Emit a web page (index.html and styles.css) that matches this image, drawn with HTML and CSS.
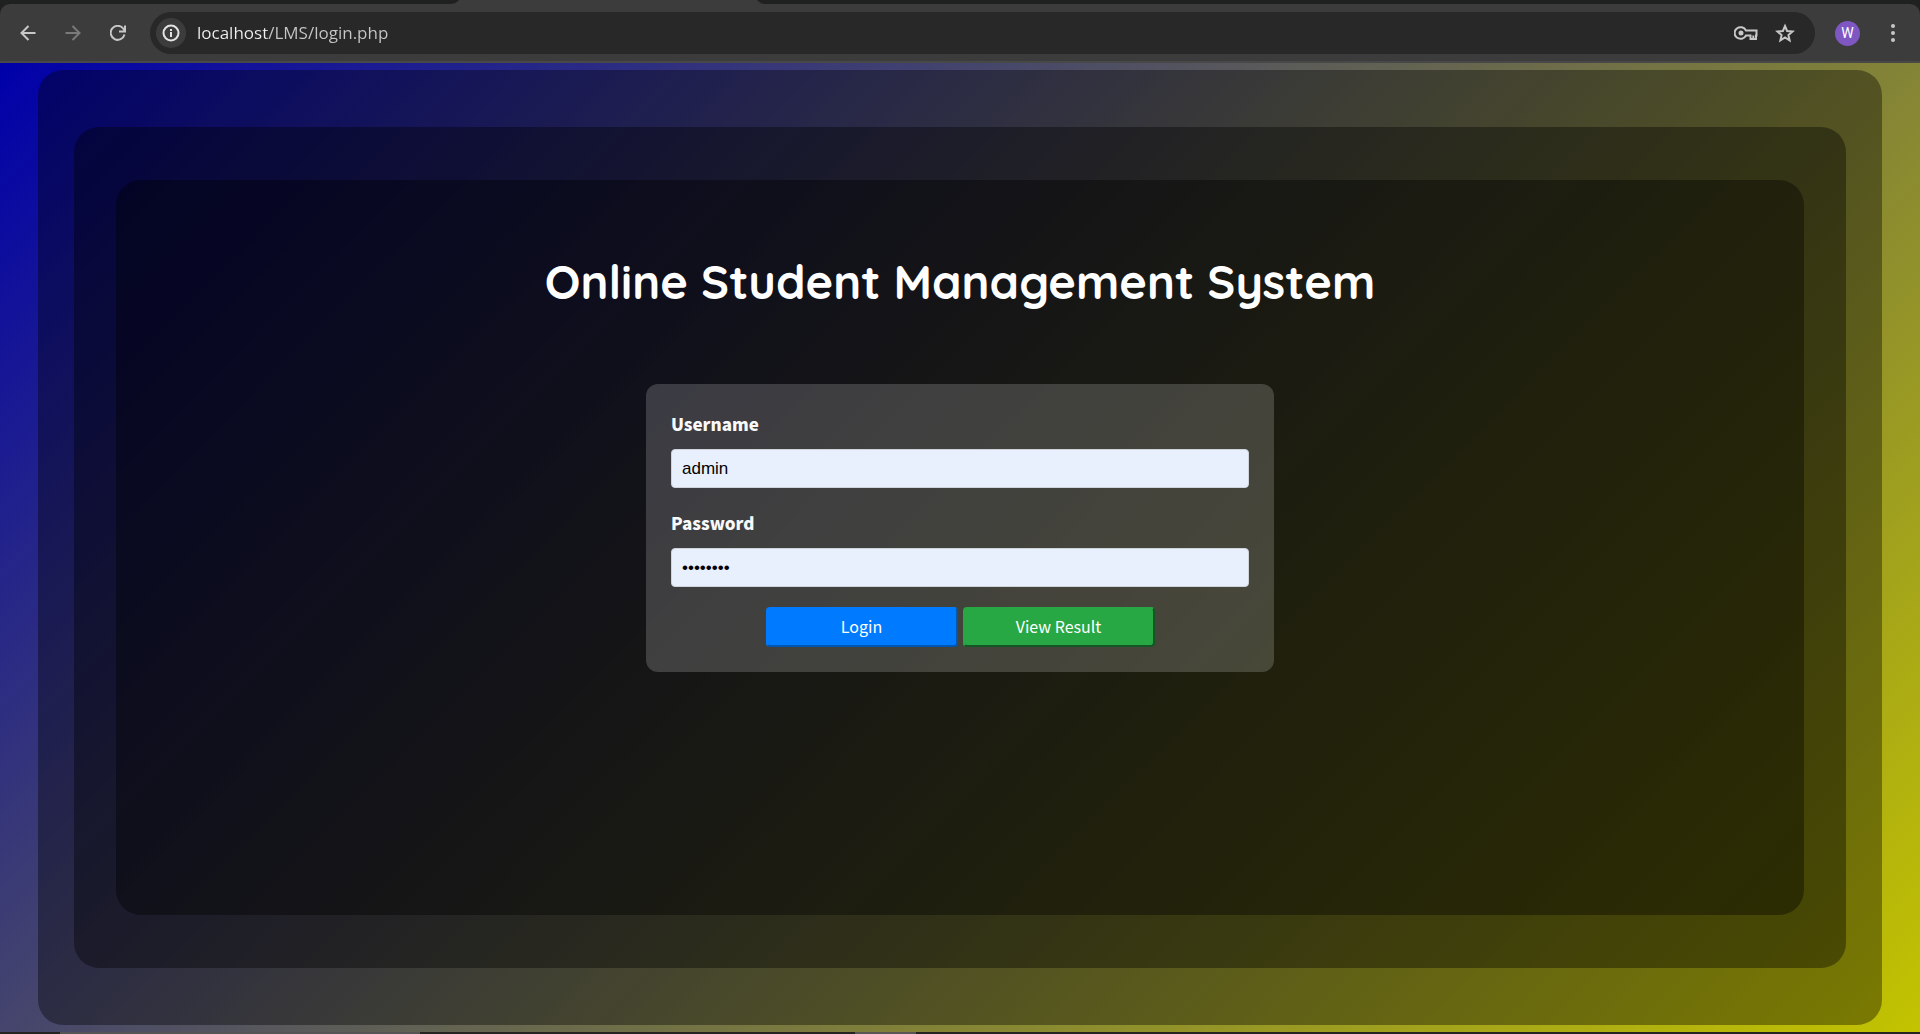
FILE: index.html
```
<!DOCTYPE html>
<html lang="en">
<head>
<meta charset="utf-8">
<meta name="viewport" content="width=device-width, initial-scale=1">
<title>Online Student Management System</title>
<link rel="stylesheet" href="styles.css">
</head>
<body>
<div class="window">
  <div class="tabs"><div class="tab-active"></div></div>
  <header class="toolbar">
    <nav class="nav">
      <button class="icon-btn" type="button" aria-label="Back">
        <svg width="16" height="16" viewBox="0 0 16 16" fill="none" stroke="#c7c7c7" stroke-width="2"><path d="M15.500 8H2M8.500 1L1.500 8l7 7"/></svg>
      </button>
      <button class="icon-btn" type="button" aria-label="Forward" disabled>
        <svg width="16" height="16" viewBox="0 0 16 16" fill="none" stroke="#7a7a7a" stroke-width="2"><path d="M.5 8H14M7.500 1l7 7-7 7"/></svg>
      </button>
      <button class="icon-btn" type="button" aria-label="Reload">
        <svg width="16" height="16" viewBox="0 0 16 16" fill="none" stroke="#c7c7c7" stroke-width="2"><path d="M14.500 9.500A7 7 0 1 1 13.200 3.500L14.500 5.500M15 .5v6H9"/></svg>
      </button>
    </nav>
    <div class="omnibox">
      <button class="site-info" type="button" aria-label="Site information">
        <svg width="18" height="18" viewBox="0 0 18 18" fill="none" stroke="#e3e3e3" stroke-width="2"><circle cx="9" cy="9" r="7.500"/><path d="M9 8v5M9 5v2"/></svg>
      </button>
      <input class="url" type="text" aria-label="Address" value="localhost/LMS/login.php">
      <button class="icon-btn" type="button" aria-label="Passwords">
        <svg width="24" height="14" viewBox="0 0 24 14" fill="none" stroke="#c7c7c7" stroke-width="2"><path d="M12 4.500A6 5.800 0 1 0 12 9.500H16.500V13H22V9.500H22.500V4.500zM19.300 9.500V12"/><circle cx="7" cy="7" r="2.500" fill="#c7c7c7" stroke="none"/></svg>
      </button>
      <button class="icon-btn" type="button" aria-label="Bookmark">
        <svg width="20" height="20" viewBox="0 0 20 20" fill="none" stroke="#c7c7c7" stroke-width="2"><path d="M10 3l2.100 5 5.400.5-4.100 3.500 1.200 5.300L10 14.500l-4.600 2.800L6.600 12 2.500 8.500 7.900 8z"/></svg>
      </button>
    </div>
    <button class="avatar" type="button">W</button>
    <button class="icon-btn" type="button" aria-label="Menu">
      <svg width="6" height="18" viewBox="0 0 6 18" fill="#c7c7c7"><circle cx="3" cy="2" r="2"/><circle cx="3" cy="9" r="2"/><circle cx="3" cy="16" r="2"/></svg>
    </button>
  </header>

  <div class="page">
    <div class="layer layer-outer">
      <div class="layer layer-middle">
        <main class="layer layer-inner">
          <h1 class="title">Online Student Management System</h1>
          <form class="card">
            <div class="field">
              <label class="label" for="username">Username</label>
              <input class="control" id="username" type="text" value="admin">
            </div>
            <div class="field">
              <label class="label" for="password">Password</label>
              <input class="control" id="password" type="password" value="admin123">
            </div>
            <div class="actions">
              <button class="btn btn-primary" type="button">Login</button>
              <button class="btn btn-success" type="button">View Result</button>
            </div>
          </form>
        </main>
      </div>
    </div>
  </div>

  <div class="taskbar"><div class="task-search"></div><div class="task-app"></div></div>
</div>
</body>
</html>
```

FILE: styles.css
```
* { box-sizing: border-box; }

body { margin: 0; }

button, input { font: inherit; }

.window {
  min-height: 100vh;
  display: flex;
  flex-direction: column;
  background: #1f2120;
}

/* Browser toolbar */
.tabs { height: 4px; padding-left: 450px; }
.tab-active { width: 316px; height: 4px; background: #3c3c3c; clip-path: path("M0 4Q6 4 9 0H307Q310 4 316 4Z"); }

.toolbar {
  height: 59px;
  display: flex;
  align-items: center;
  padding: 1px 24px 0 18px;
  border-bottom: 2px solid #484848;
  border-radius: 10px 10px 0 0;
  background: #3c3c3c;
}

.icon-btn {
  display: grid;
  place-items: center;
  padding: 0;
  border: 0;
  background: none;
}

.nav { display: flex; gap: 25px; margin-right: 22px; }
.nav .icon-btn { width: 20px; height: 20px; }

.omnibox {
  flex: 1;
  height: 42px;
  display: flex;
  align-items: center;
  gap: 17px;
  padding: 0 20px 0 6px;
  border-radius: 21px;
  background: #282828;
}

.site-info {
  width: 30px;
  height: 30px;
  display: grid;
  place-items: center;
  padding: 0;
  border: 0;
  border-radius: 50%;
  background: #3c3c3c;
}

.url {
  flex: 1;
  margin-left: -6px;
  padding: 0;
  border: 0;
  color: transparent;
  background: linear-gradient(90deg, #f0f0f0 69px, #c7c7c7 69px);
  background-clip: text;
  font: 17px/26px "Segoe UI", "Open Sans", sans-serif;
}

.avatar {
  width: 25px;
  height: 25px;
  margin: 0 30px 0 20px;
  padding: 0;
  border: 0;
  border-radius: 50%;
  background: #7e57c2;
  color: #fff;
  font: 400 14px/25px Roboto, sans-serif;
}

/* Login page */
.page {
  flex: 1;
  display: flex;
  padding: 7px 2%;
  background: linear-gradient(135deg, #0000aa, #5a5a5a 44%, #c3c300);
}

.layer {
  flex: 1;
  display: flex;
  border-radius: 25px;
  background: rgba(0, 0, 0, 0.37);
}
.layer-outer { padding: 57px 36px; }
.layer-middle { padding: 53px 42px; }
.layer-inner {
  flex-direction: column;
  align-items: center;
  padding: 72px 24px;
}

.title {
  margin: 0 0 72px;
  color: #fff;
  font: 700 47px/60px Quicksand, Lato, sans-serif;
  text-align: center;
}

.card {
  width: 100%;
  max-width: 628px;
  display: flex;
  flex-direction: column;
  gap: 20px;
  padding: 25px;
  border-radius: 12px;
  background: rgba(255, 255, 255, 0.18);
  font-family: "Source Sans Pro", "Noto Sans CJK JP", sans-serif;
}

.field { display: flex; flex-direction: column; gap: 10px; }

.label { color: #f8f9fa; font-size: 17px; font-weight: 900; line-height: 30px; }

.control {
  width: 100%;
  height: 39px;
  padding: 0 10px;
  border: 1px solid #ced4da;
  border-radius: 4px;
  background: #e8f0fe;
  color: #000;
  font: 17px/24px Arial, "Liberation Sans", sans-serif;
}

.actions { display: flex; justify-content: center; gap: 5px; }

.btn {
  width: 192px;
  height: 40px;
  padding: 0 0 2px;
  border: 2px solid;
  border-radius: 4px;
  color: #fff;
  font-size: 16px;
  line-height: 24px;
}
.btn-primary { background: #007bff; border-color: #007bff #0056b3 #0056b3 #007bff; }
.btn-success { background: #28a745; border-color: #28a745 #155724 #155724 #28a745; }

/* Desktop taskbar edge */
.taskbar { height: 2px; display: flex; padding-left: 60px; gap: 435px; background: #262323; }
.task-search { width: 360px; background: #555; }
.task-app { width: 61px; background: #5a5656; }
```
